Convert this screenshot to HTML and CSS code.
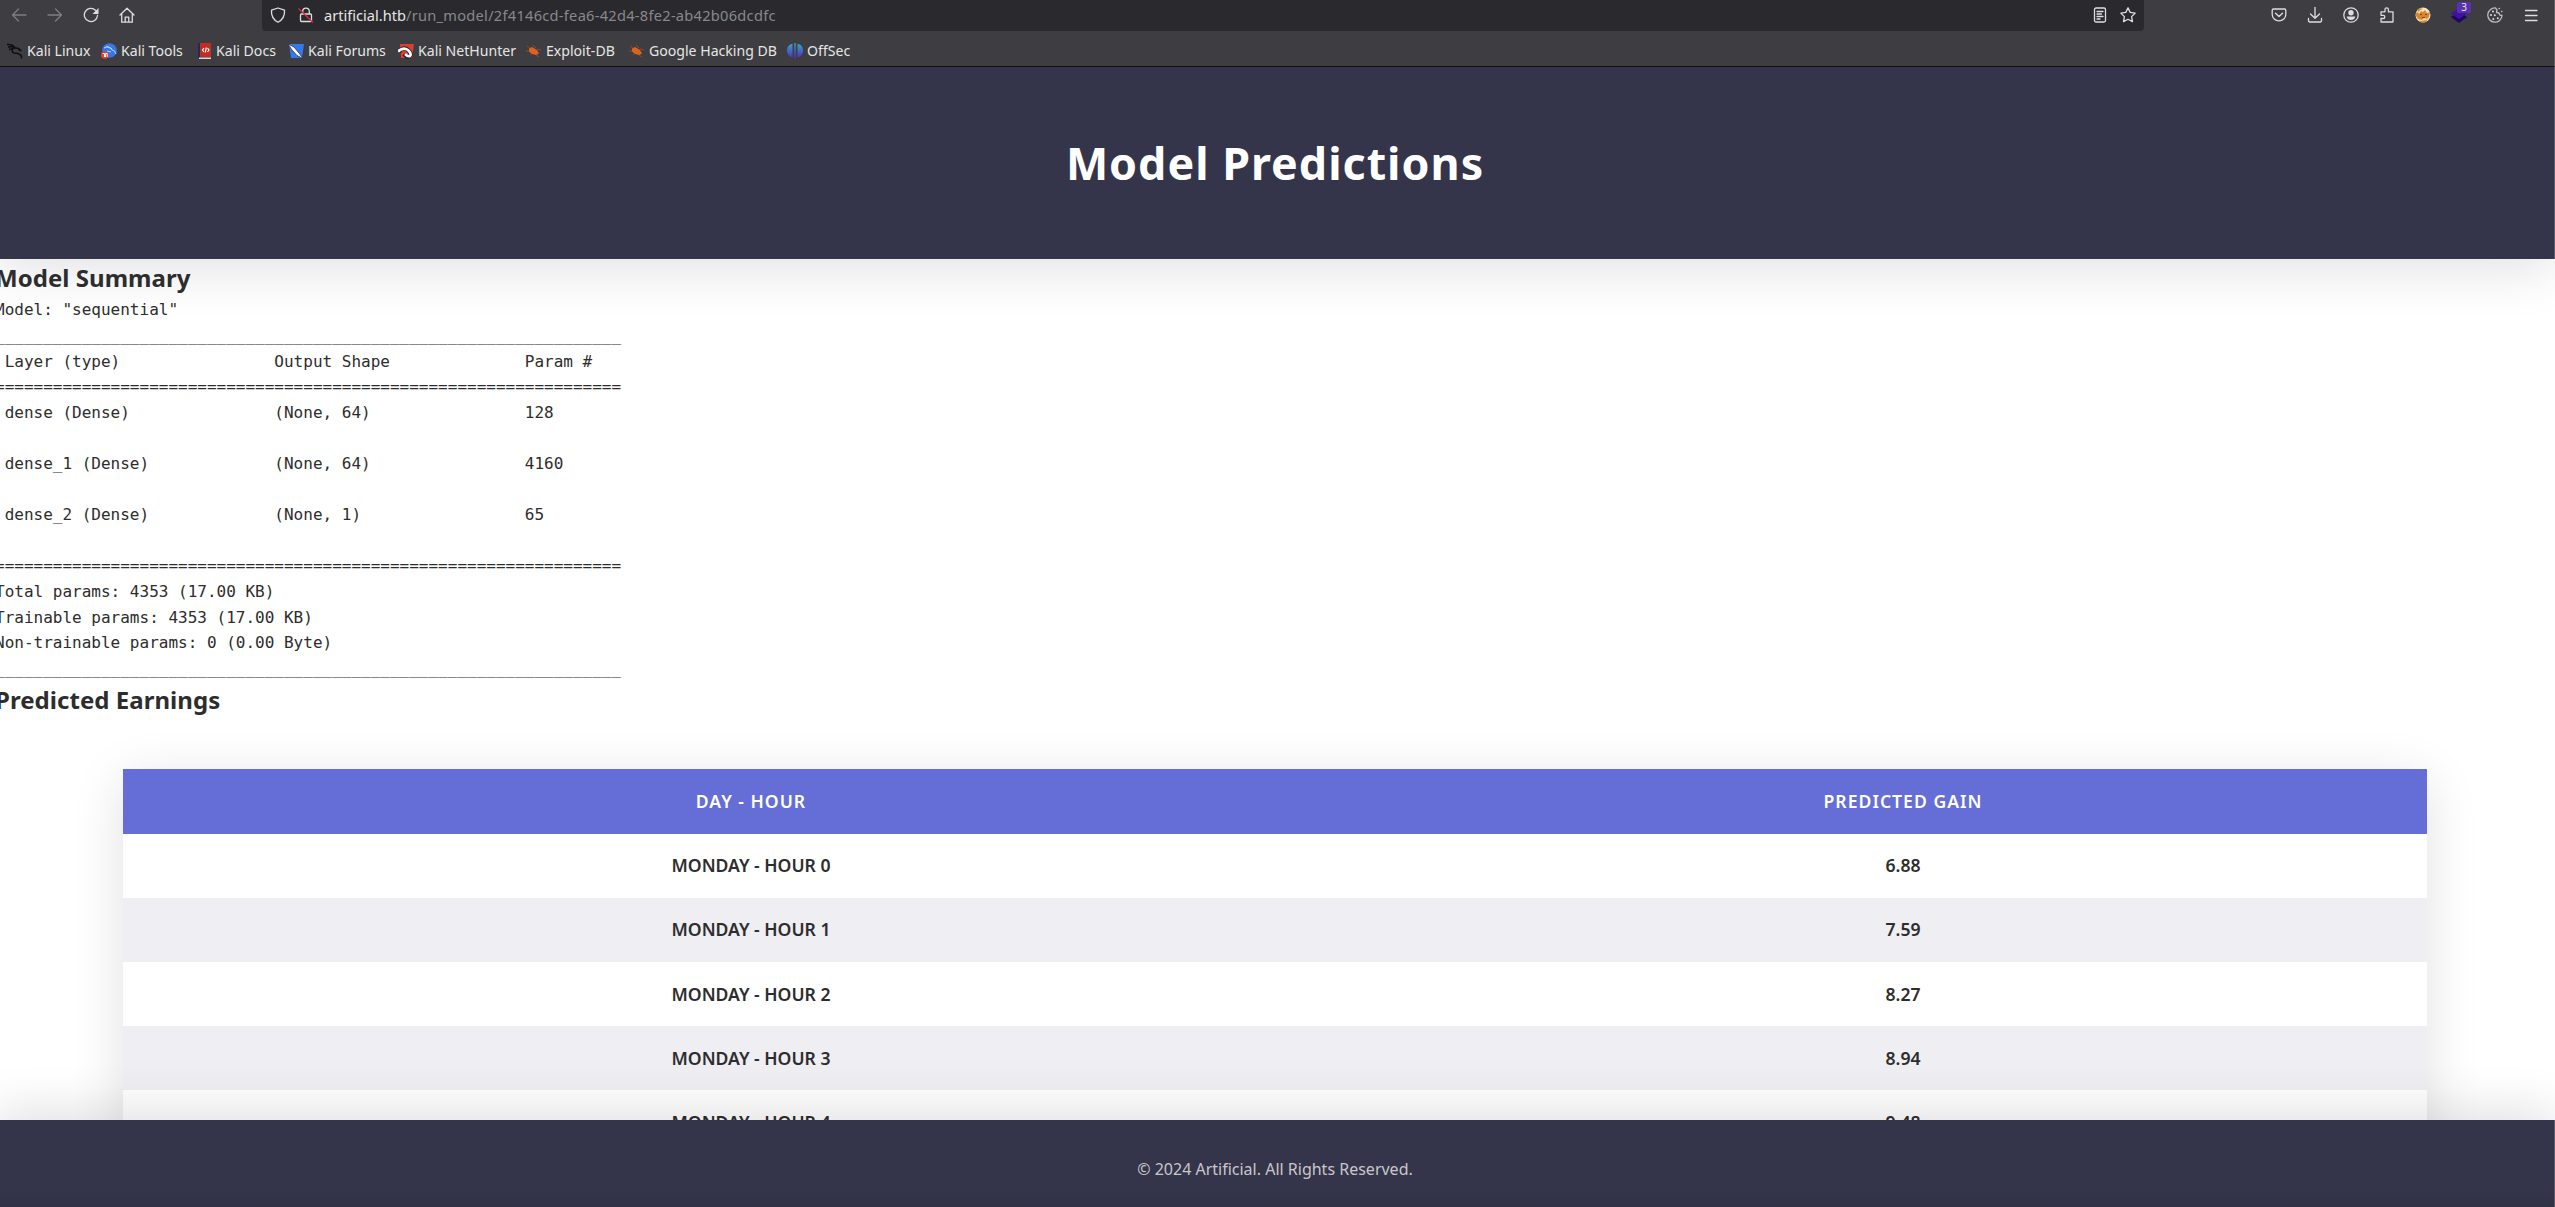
FILE: index.html
```html
<!DOCTYPE html>
<html lang="en">
<head>
<meta charset="utf-8">
<title>Model Predictions</title>
<link rel="stylesheet" href="styles.css">
</head>
<body>
<div class="browser">
  <div class="nav">
    <div class="nav-buttons">
      <svg class="icon dim" viewBox="0 0 16 16"><path d="M15 8H1.500M7.500 2 1.500 8l6 6"/></svg>
      <svg class="icon dim" viewBox="0 0 16 16"><path d="M1 8h13.500M8.500 2l6 6-6 6"/></svg>
      <svg class="icon" viewBox="0 0 16 16"><path d="M14.500 8.500A6.600 6.600 0 1 1 12.500 3.200"/><path class="solid" d="M15.500 1v6H9.500z"/></svg>
      <svg class="icon" viewBox="0 0 16 16"><path d="M1 8 8 1.200 15 8M2.700 7v8.200h10.600V7M6.200 15v-4.800h3.600V15"/></svg>
    </div>
    <div class="address">
      <svg class="icon" viewBox="0 0 16 16"><path d="M8 1 14.500 3.200C15 9 12 13 8 15.200 4 13 1 9 1.500 3.200z"/></svg>
      <svg class="icon lock" viewBox="0 0 16 16"><path d="M4.700 7V4.500a3.300 3.300 0 0 1 6.600 0V7M3.500 7h9q1 0 1 1v5.500q0 1-1 1h-9q-1 0-1-1V8q0-1 1-1z"/><path class="slash" d="M1 2 14.500 15"/></svg>
      <div class="url"><span>artificial.htb</span><span class="path">/run_model/2f4146cd-fea6-42d4-8fe2-ab42b06dcdfc</span></div>
      <svg class="icon reader" viewBox="0 0 16 16"><rect x="2.500" y="1" width="11" height="14" rx="1.500"/><path d="M5 4.500h6M5 7h4.500M5 9.500h6M5 12h3"/></svg>
      <svg class="icon" viewBox="0 0 16 16"><path d="m8 .9 2.200 4.500 5 .7-3.600 3.500.9 5L8 12.200l-4.500 2.400.9-5L.8 6.100l5-.7z"/></svg>
    </div>
    <div class="tools">
      <svg class="icon" viewBox="0 0 16 16"><path d="M2.500 2h11q1.300 0 1.300 1.300V7.500a6.800 6.300 0 0 1-13.600 0V3.300Q1.200 2 2.500 2zM4.500 6.200 8 9.500l3.500-3.300"/></svg>
      <svg class="icon" viewBox="0 0 16 16"><path d="M8 0v11M3.500 7 8 11.300 12.500 7M1.500 11.500V14l1 1h11l1-1v-2.500"/></svg>
      <svg class="icon" viewBox="0 0 16 16"><circle cx="8" cy="8" r="7.200"/><circle class="solid" cx="8" cy="5.800" r="2.700"/><path class="solid" d="M3.600 9.500h8.800Q11.500 13 8 13T3.600 9.500z"/></svg>
      <svg class="icon" viewBox="0 0 16 16"><path d="M2 4.800h4V2.500a1.700 1.700 0 0 1 3.400 0v2.300H14V15H2v-3.500h2.200a1.500 1.500 0 0 0 0-3.200H2z"/></svg>
      <svg class="icon fox" viewBox="0 0 16 16"><circle cx="8" cy="8" r="7.500" fill="#eee5d2"/><path fill="#dc8628" d="M1 6 3 5 4 7l2-3 2 1 2-2 2 3 3-1-1 5-2 2-3-1-2 2-4-1-2-3zM3 13l3 1 5-1 2-1-3 3.500H6zM2 3l3-2 3 1-3 1-1 2z"/><path fill="#7c4a1c" d="M5 7h2v1H5zM10 7h2v1h-2zM7 10h3v1H7z"/></svg>
      <div class="layers">
        <svg class="icon" viewBox="0 0 16 16"><path fill="#20065f" d="M0 10 8 5l8 5-8 6z"/><path fill="#3f12a5" d="M0 6.500 8 1l8 5.500L8 12z"/></svg>
        <span class="count">3</span>
      </div>
      <svg class="icon cookie" viewBox="0 0 16 16"><path d="M8.500 1A7.100 7.100 0 1 0 15 8.500L12.800 8 12 6 9.500 5.500 10 3z"/><path d="M12 1.500h.5M14.500 4.500h.5"/><g class="solid"><circle cx="6" cy="4.500" r="1"/><circle cx="4" cy="8" r="1"/><circle cx="7.800" cy="8.300" r="1"/><circle cx="6.300" cy="12" r="1"/><circle cx="10.800" cy="11.200" r="1"/></g></svg>
      <svg class="icon" viewBox="0 0 16 16"><path d="M2.500 3.500h11.500M2.500 8.500h11.500M2.500 13.500h11.500"/></svg>
    </div>
  </div>
  <div class="bookmarks">
    <div class="bookmark b1"><svg viewBox="0 0 16 16"><path class="dragon" d="M0 1.500q5-.5 7 2L1 4M2 6.500l6-1.500q3-.5 5 1.500M6 5q-2 4 1 5 3 0 5 1 3 1 2.500 4.500M11 6l3.500 2"/></svg><span>Kali Linux</span></div>
    <div class="bookmark b2"><svg viewBox="0 0 16 16"><circle cx="8.500" cy="7.500" r="7.300" fill="#3677e8"/><path d="M3 5q6-3 8 2 3 0 4 4M5 3l6 3M6 8l4 1" stroke="#b9d3ff" fill="none"/><circle cx="3.800" cy="12" r="3.800" fill="#e34332"/><path d="M1.500 10.500h2V14M4.500 14v-3.500h1.700V14" stroke="#fff" fill="none" stroke-width=".9"/></svg><span>Kali Tools</span></div>
    <div class="bookmark b3"><svg viewBox="0 0 16 16"><path fill="#252765" d="M2 0h4v15H2z"/><path fill="#c52c21" d="M4 0h11v14H4z"/><path fill="#ddd" d="M3 14.500h12V16H3z"/><path d="M8 5 6.500 7 8 9M11.500 5 13 7l-1.500 2M10.300 4.500 9.300 9.500" stroke="#fff" fill="none" stroke-width="1.200"/></svg><span>Kali Docs</span></div>
    <div class="bookmark b4"><svg viewBox="0 0 16 16"><path fill="#3478ed" d="M1 1h15l-2 14H3z"/><path fill="#fff" stroke="#222" stroke-width=".7" d="M0 1 6 4l5 6 4 5.500-6-3L4 7z"/></svg><span>Kali Forums</span></div>
    <div class="bookmark b5"><svg viewBox="0 0 16 16"><path fill="#df3d31" d="M2 1h14l-2 14H3z"/><path d="M1 9q4-6 9-2 4 4 2 6-3 2-6-2" stroke="#222" stroke-width="4.200" fill="none"/><path d="M0 8.500q5-5 10-1.500 4 4 2 6-2 1-5-2" stroke="#fff" stroke-width="2.600" fill="none"/></svg><span>Kali NetHunter</span></div>
    <div class="bookmark b6"><svg viewBox="0 0 16 16"><path d="M1 3l4 3M0 8h4M4 12l3-3M7 2l3 3M11 6l4 1M10 12l3 2" stroke="#8f4a2c" fill="none"/><path fill="#dc6222" d="M3 5.500 6 4 11 7l2 3.500-3 1.500-4-1-3-2.500z"/></svg><span>Exploit-DB</span></div>
    <div class="bookmark b7"><svg viewBox="0 0 16 16"><path d="M1 3l4 3M0 8h4M4 12l3-3M7 2l3 3M11 6l4 1M10 12l3 2" stroke="#8f4a2c" fill="none"/><path fill="#dc6222" d="M3 5.500 6 4 11 7l2 3.500-3 1.500-4-1-3-2.500z"/></svg><span>Google Hacking DB</span></div>
    <div class="bookmark b8"><svg viewBox="0 0 16 16"><defs><linearGradient id="os" gradientUnits="userSpaceOnUse" x1="0" y1="0" x2="0" y2="16"><stop stop-color="#3aa8c4"/><stop offset="1" stop-color="#5127c4"/></linearGradient></defs><path fill="url(#os)" d="M5.500.8v13.700Q0 13 0 7.500T5.500.8zM7.300 0h1.400v16H7.300zM10.500.8Q16 2 16 7.500t-5.500 7z"/></svg><span>OffSec</span></div>
  </div>
</div>
<div class="page">
  <header class="hero"><h1>Model Predictions</h1></header>
  <main>
    <h2>Model Summary</h2>
<pre>Model: "sequential"
_________________________________________________________________
 Layer (type)                Output Shape              Param #   
=================================================================
 dense (Dense)               (None, 64)                128       
                                                                 
 dense_1 (Dense)             (None, 64)                4160      
                                                                 
 dense_2 (Dense)             (None, 1)                 65        
                                                                 
=================================================================
Total params: 4353 (17.00 KB)
Trainable params: 4353 (17.00 KB)
Non-trainable params: 0 (0.00 Byte)
_________________________________________________________________</pre>
    <h2>Predicted Earnings</h2>
    <table>
      <thead><tr><th>Day - Hour</th><th>Predicted Gain</th></tr></thead>
      <tbody>
        <tr><td>Monday - Hour 0</td><td>6.88</td></tr>
        <tr><td>Monday - Hour 1</td><td>7.59</td></tr>
        <tr><td>Monday - Hour 2</td><td>8.27</td></tr>
        <tr><td>Monday - Hour 3</td><td>8.94</td></tr>
        <tr><td>Monday - Hour 4</td><td>9.48</td></tr>
      </tbody>
    </table>
  </main>
  <footer>© 2024 Artificial. All Rights Reserved.</footer>
</div>
</body>
</html>
```
FILE: styles.css
```css
* { box-sizing: border-box; }
body {
  position: relative;
  margin: 0;
  height: 1207px;
  display: flex;
  flex-direction: column;
  overflow: hidden;
  background: #fff;
  color: #2d2d2d;
  font-family: "Noto Sans", sans-serif;
}

/* Window edge */
body::after {
  content: "";
  position: absolute;
  top: 0;
  right: 0;
  bottom: 0;
  width: 1px;
  background: rgba(255, 255, 255, .2);
}

/* Browser toolbar */
.browser {
  flex: none;
  height: 67px;
  background: #3d3d42;
  border-bottom: 1px solid #101014;
  color: #e6e6e3;
}
.nav { display: flex; height: 31px; }
.nav-buttons { display: flex; align-items: center; gap: 20px; width: 262px; padding: 0 0 1px 11px; }
.icon { flex: none; width: 16px; height: 16px; fill: none; stroke: #dedee0; stroke-width: 1.3; stroke-linejoin: round; stroke-linecap: round; }
.icon .solid { fill: #dedee0; stroke: none; }
.dim { stroke: #7d7d82; }
.address {
  display: flex;
  align-items: center;
  width: 1882px;
  padding: 0 8px 1px;
  background: #2a2a2e;
  border-radius: 0 0 4px 4px;
}
.lock { margin-left: 12px; }
.icon .slash { stroke: #e22850; }
.url { flex: 1; margin-left: 10px; font-size: 14.6px; line-height: 20px; white-space: nowrap; }
.path { color: #88888c; letter-spacing: .28px; }
.reader { margin-right: 12px; }
.tools { display: flex; align-items: center; gap: 20px; margin-left: auto; padding: 0 16px 1px 0; }
.fox, .layers .icon { stroke: none; }
.cookie { stroke: #bdbdc0; }
.layers { position: relative; display: flex; }
.count {
  position: absolute;
  left: 6px;
  top: -5px;
  width: 14px;
  height: 11px;
  background: #5931b0;
  border-radius: 1px;
  font-size: 10px;
  line-height: 11px;
  text-align: center;
}
.bookmarks { display: flex; height: 35px; padding: 4px 0 0 7px; align-items: center; font-size: 14.1px; }
.bookmark { display: flex; flex: none; align-items: center; gap: 4px; height: 20px; line-height: 20px; white-space: nowrap; }
.bookmark svg { flex: none; width: 16px; height: 16px; }
.dragon { fill: none; stroke: #101012; stroke-width: 1.5; }
.b1 { width: 94px; }
.b2 { width: 95px; }
.b3 { width: 92px; }
.b4 { width: 110px; }
.b5 { width: 128px; }
.b6 { width: 103px; }
.b7 { width: 158px; }

/* Web page */
.page {
  position: relative;
  flex: 1;
  width: 2560px;
  margin-left: -5px;
  overflow: hidden;
  line-height: 1.6;
}
.hero {
  height: 192px;
  padding-top: 60px;
  background: #34344b;
  box-shadow: 0 10px 50px rgba(0, 0, 0, .12);
  color: #fff;
  text-align: center;
}
h1 { margin: 0; font-size: 44.8px; letter-spacing: 1px; }
h2 { margin: 0; font-size: 24px; letter-spacing: .04px; }
pre { margin: 0; font: 16px/25.6px "DejaVu Sans Mono", monospace; }
table {
  width: 2304px;
  margin: 49px auto 0;
  border-collapse: collapse;
  table-layout: fixed;
  background: #fff;
  box-shadow: 0 10px 50px rgba(0, 0, 0, .12);
  font-size: 17.6px;
  text-transform: uppercase;
  text-align: center;
}
th, td { padding: 18px; font-weight: 600; }
th { height: 65px; background: #646ed6; color: #fff; letter-spacing: 1px; }
td { height: 64px; line-height: 28px; }
tbody tr:nth-child(-n+2) td { padding: 17px 18px 19px; }
th:first-child, td:first-child { width: 1256px; }
tbody tr:nth-child(even) { background: #eeeef3; }
footer {
  position: absolute;
  left: 0;
  right: 0;
  bottom: 0;
  height: 87px;
  padding-top: 37px;
  background: linear-gradient(#34344b 70%, #323247);
  box-shadow: 0 -10px 50px rgba(0, 0, 0, .12);
  color: #c8c8ca;
  font-size: 16px;
  text-align: center;
}
```
